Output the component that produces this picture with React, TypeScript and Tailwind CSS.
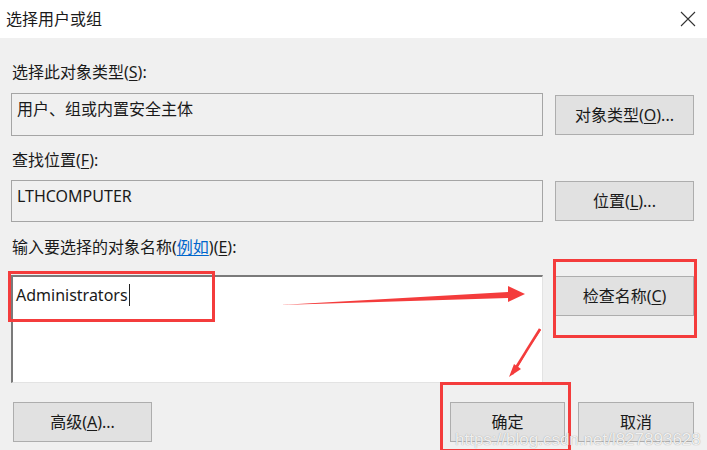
import React from "react"

const btn =
  "w-[139px] h-[40px] shrink-0 flex items-center justify-center bg-[#e1e1e1] border border-[#adadad] text-[16px] text-[#1a1a1a]"

function Key({ k }: { k: string }) {
  return <span className="underline underline-offset-2">{k}</span>
}

export default function App() {
  return (
    <div
      className="relative w-[707px] h-[450px] flex flex-col overflow-hidden text-[#1a1a1a]"
      style={{ fontFamily: "'Noto Sans', 'Noto Sans CJK SC', sans-serif" }}
    >
      <div className="h-[38px] bg-white flex items-center justify-between pl-[6px] pr-[10px]">
        <span className="text-[16px] leading-5">选择用户或组</span>
        <svg width="16" height="16" viewBox="0 0 16 16" className="mr-[1px]">
          <path d="M1 1 L15 15 M15 1 L1 15" stroke="#333" strokeWidth="1.1" />
        </svg>
      </div>

      <div className="flex-1 bg-[#f0f0f0] pl-[11px] pr-[13px] flex flex-col">
        <div className="mt-[24px] text-[16px] leading-5 pl-[1px]">
          选择此对象类型(<Key k="S" />):
        </div>
        <div className="mt-[11px] flex items-center gap-[12px]">
          <div className="flex-1 h-[43px] border border-[#a5a5a5] bg-[#f0f0f0] px-[5px] pt-[5px] text-[16px] leading-5">
            用户、组或内置安全主体
          </div>
          <div className={btn}>
            对象类型(<Key k="O" />)...
          </div>
        </div>

        <div className="mt-[14px] text-[16px] leading-5 pl-[1px]">
          查找位置(<Key k="F" />):
        </div>
        <div className="mt-[10px] flex items-center gap-[12px]">
          <div className="flex-1 h-[42px] border border-[#a5a5a5] bg-[#f0f0f0] px-[5px] pt-[5px] text-[16px] leading-5">
            LTHCOMPUTER
          </div>
          <div className={btn}>
            位置(<Key k="L" />)...
          </div>
        </div>

        <div className="mt-[15px] text-[16px] leading-5 pl-[1px]">
          输入要选择的对象名称(<span className="text-[#0066cc] underline underline-offset-2">例如</span>)(<Key k="E" />):
        </div>
        <div className="mt-[18px] flex items-start gap-[12px]">
          <div className="flex-1 h-[108px] bg-white border-t-2 border-l-2 border-[#7a7a7a] border-r border-b border-r-[#e3e3e3] border-b-[#e3e3e3] px-[3px] pt-[7px]">
            <div className="flex items-center text-[16px] leading-5">
              <span>Administrators</span>
              <span className="w-[1px] h-[22px] bg-[#222] ml-[1px]" />
            </div>
          </div>
          <div className={btn + " mt-[1px]"}>
            检查名称(<Key k="C" />)
          </div>
        </div>

        <div className="mt-[19px] flex items-center">
          <div className={btn + " ml-[2px]"}>
            高级(<Key k="A" />)...
          </div>
          <div className="flex-1" />
          <div className={btn.replace("w-[139px]", "w-[115px]")}>确定</div>
          <div className={btn.replace("w-[139px]", "w-[116px]") + " ml-[13px]"}>取消</div>
        </div>
      </div>

      {/* annotations */}
      <div className="absolute left-[8px] top-[271px] w-[207px] h-[51px] border-[3px] border-[#f43c3c]" />
      <div className="absolute left-[553px] top-[259px] w-[144px] h-[79px] border-[3px] border-[#f43c3c]" />
      <div className="absolute left-[440px] top-[382px] w-[131px] h-[70px] border-[3px] border-[#f43c3c]" />
      <svg className="absolute left-0 top-0 pointer-events-none" width="707" height="450" viewBox="0 0 707 450">
        <polygon points="280,305 508,292 508,286 525,294 508,302 508,298" fill="#f43c3c" />
        <polygon points="540,329 518,367 514,364 509,377 521,369 517,366 541,330" fill="#f43c3c" />
        <path d="M540 329 L512 374" stroke="#f43c3c" strokeWidth="2.5" />
      </svg>
      <div
        className="absolute left-[455px] top-[430px] text-[17px] leading-5 whitespace-nowrap text-white/85 [text-shadow:0_0_1px_#8a8a8a]"
        style={{ fontFamily: "'Liberation Sans', sans-serif" }}
      >
        https://blog.csdn.net/l827893628
      </div>
    </div>
  )
}
